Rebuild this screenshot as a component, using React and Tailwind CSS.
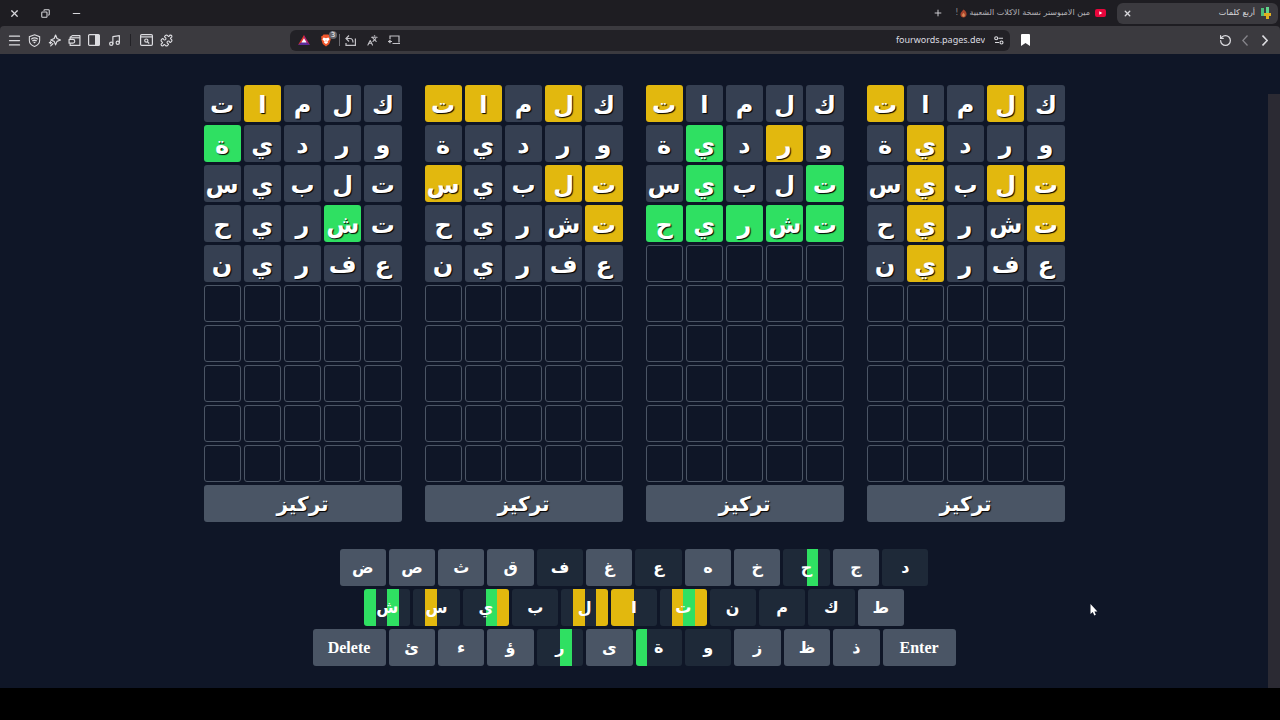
/**
 * Four Words (أربع كلمات)
 *
 * Four boards that share the same guesses, with an on-screen keyboard
 * whose keys show one colour strip per board.
 */

import {
  X, Copy, Minus, Plus, Menu, Music, Puzzle, Languages, RotateCcw,
} from 'lucide-react';

const GUESSES = ['كلمات', 'وردية', 'تلبيس', 'تشريح', 'عفرين'];
const MAX_ROWS = 10;

// g = right place, y = wrong place, - = not in the word (in reading order)
const BOARDS = [
  ['---y-', '----g', '-----', '-g---', '-----'],
  ['-y-yy', '-----', 'yy--y', 'y----', '-----'],
  ['----y', '-y-g-', 'g--g-', 'ggggg'],
  ['-y--y', '---y-', 'yy-y-', 'y--y-', '---y-'],
];

const KEY_ROWS = [
  ['ض', 'ص', 'ث', 'ق', 'ف', 'غ', 'ع', 'ه', 'خ', 'ح', 'ج', 'د'],
  ['ش', 'س', 'ي', 'ب', 'ل', 'ا', 'ت', 'ن', 'م', 'ك', 'ط'],
  ['Delete', 'ئ', 'ء', 'ؤ', 'ر', 'ى', 'ة', 'و', 'ز', 'ظ', 'ذ', 'Enter'],
];

const ROW_WIDTHS = ['max-w-[589px]', 'max-w-[540px]', 'max-w-[643px]'];

const MARK_COLORS = {
  g: 'bg-[#2fe062]',
  y: 'bg-[#e2b80e]',
  '-': 'bg-[#364052]',
};

const usedLetters = new Set(GUESSES.join(''));

// Best mark a letter has received on one board
const getMark = (board, letter) => {
  let best = null;
  board.forEach((marks, row) => {
    [...GUESSES[row]].forEach((char, i) => {
      if (char !== letter) return;
      if (marks[i] === 'g') best = 'g';
      if (marks[i] === 'y' && best !== 'g') best = 'y';
    });
  });
  return best;
};

function IconButton({ label, className = '', children }) {
  return (
    <button aria-label={label} className={`flex h-5 w-5 flex-none items-center justify-center ${className}`}>
      {children}
    </button>
  );
}

function TabBar() {
  return (
    <div className="flex h-[26px] items-center bg-[#1e1d22] pl-1 pr-[2px] text-[#d8d8dc]">
      <div className="flex items-center gap-[11px]">
        <IconButton label="إغلاق النافذة"><X size={11} strokeWidth={2.6} /></IconButton>
        <IconButton label="استعادة"><Copy size={9} strokeWidth={2.8} className="-scale-x-100" /></IconButton>
        <IconButton label="تصغير"><Minus size={11} strokeWidth={2.6} /></IconButton>
      </div>

      <div className="ml-auto flex items-center" dir="rtl">
        {/* Active tab */}
        <div className="flex h-[21px] w-[161px] items-center rounded-md bg-[#3b3a3f] pr-[7px]">
          <svg width="10" height="12" viewBox="0 0 10 12" className="flex-none">
            <path d="M0 1h3v5h2v3H0z" fill="#4cbf7a" />
            <path d="M5 0h3v6H5z" fill="#62d68c" />
            <path d="M3 6h7v3H8v3H5V9H3z" fill="#e0b020" />
          </svg>
          <span className="mr-[6px] text-[8px] leading-3">أربع كلمات</span>
          <IconButton label="إغلاق علامة التبويب" className="mr-auto"><X size={9} strokeWidth={3.6} /></IconButton>
        </div>

        {/* Background tab */}
        <div className="flex h-[21px] w-[169px] items-center pr-[11px]">
          <svg width="11" height="8" viewBox="0 0 11 8" className="flex-none">
            <rect width="11" height="8" rx="2" fill="#e8063c" />
            <path d="M4.3 2.2v3.600L7.300 4z" fill="#fff" />
          </svg>
          <span className="mr-[5px] whitespace-nowrap text-[8px] leading-3 text-[#b4b3b8]">مين الامبوستر نسخة الاكلات الشعبية</span>
          <svg width="7" height="9" viewBox="0 0 8 9" className="mr-[2px] flex-none">
            <path d="M4 0c1.500 1 3.500 2.500 3.500 5S6 9 4 9 .5 7.500 .5 5.500 2.500 2 4 0z" fill="#a8442c" />
            <path d="M4 3.500c1 1 1.600 1.800 1.600 3S4.800 8.300 4 8.300 2.400 7.500 2.400 6.500 3.200 4.500 4 3.500z" fill="#d98a58" />
          </svg>
          <span className="mr-[2px] text-[8px] leading-3 text-[#8a898e]">!</span>
        </div>
        <IconButton label="علامة تبويب جديدة"><Plus size={10} strokeWidth={2.2} /></IconButton>
      </div>
    </div>
  );
}

function Toolbar() {
  return (
    <div className="flex h-7 items-center rounded-t-sm bg-[#3b3a3f] pl-1 pr-[5px] text-[#dcdce0]">
      <IconButton label="القائمة"><Menu size={15} strokeWidth={2} /></IconButton>
      <IconButton label="VPN">
        <svg width="13" height="13" viewBox="0 0 24 24" fill="none" stroke="currentColor" strokeWidth="2">
          <path d="M12 1.500 21.500 5v7c0 5.500-4 9-9.500 11C6.500 21 2.500 17.500 2.500 12V5z" />
          <path d="M6 9.500c4-3 8-3 12 0M8 13c2.700-2 5.300-2 8 0M10.500 16.300c1-.8 2-.8 3 0" strokeWidth="2.400" />
        </svg>
      </IconButton>
      <IconButton label="Leo">
        <svg width="13" height="13" viewBox="0 0 24 24" fill="none" stroke="currentColor" strokeWidth="2.200" strokeLinejoin="round">
          <path d="m14 2 2.600 6.400L23 11l-6.400 2.600L14 20l-2.600-6.400L5 11l6.400-2.600z" />
          <path d="M4.500 14v4M2.500 16h4M5 22l4-4" strokeLinecap="round" />
        </svg>
      </IconButton>
      <IconButton label="المحفظة">
        <svg width="13" height="13" viewBox="0 0 24 24" fill="none" stroke="currentColor" strokeWidth="2.200" strokeLinejoin="round">
          <path d="M4 10V6l4-3h14v18H4v-4" />
          <path d="M4 7h18" />
          <path d="M2 10h7a3.500 3.500 0 0 1 0 7H2z" />
        </svg>
      </IconButton>
      <IconButton label="الشريط الجانبي">
        <svg width="12" height="12" viewBox="0 0 12 12">
          <rect x="0.600" y="0.600" width="10.800" height="10.800" rx="1" fill="none" stroke="currentColor" strokeWidth="1.200" />
          <path d="M7 1h4.500v10H7z" fill="currentColor" />
        </svg>
      </IconButton>
      <IconButton label="الموسيقى"><Music size={13} strokeWidth={2.2} /></IconButton>
      <div className="flex w-3 justify-center"><span className="h-3 w-px bg-[#222126]" /></div>
      <IconButton label="بحث في الصفحة">
        <svg width="13" height="12" viewBox="0 0 13 12" fill="none" stroke="currentColor" strokeWidth="1.200">
          <rect x="0.600" y="0.600" width="11.800" height="10.800" rx="1.200" />
          <path d="M.6 2.900h11.800" />
          <circle cx="6.300" cy="6.600" r="1.600" />
          <path d="m7.500 7.800 1.700 1.700" />
        </svg>
      </IconButton>
      <IconButton label="الإضافات"><Puzzle size={13} strokeWidth={2.1} /></IconButton>

      {/* Address bar */}
      <div className="ml-[114px] flex h-[21px] flex-1 items-center rounded-md bg-[#222126] pl-1 pr-[1px]">
        <IconButton label="Brave Rewards">
          <svg width="12" height="10" viewBox="0 0 12 10">
            <path d="M6 0v6L0 10z" fill="#e2352b" />
            <path d="M6 0v6l6 4z" fill="#b5206f" />
            <path d="M0 10h12L6 5.500z" fill="#5c2b9b" />
            <path d="m6 3.300 2.600 4.200H3.400z" fill="#fff" />
          </svg>
        </IconButton>
        <IconButton label="Brave Shields" className="relative ml-[2px]">
          <svg width="12" height="13" viewBox="0 0 24 26">
            <path d="M7 1h10l2.500 3L22 5l-1 4 .5 2-3 9-6.500 5-6.500-5-3-9L3 9 2 5l2.500-1z" fill="#f0562b" />
            <path d="m7 7 5 1.500L17 7l2 4-4 4 1 2-4 3-4-3 1-2-4-4zM12 11l-1 4h2z" fill="#fff" fillRule="evenodd" />
          </svg>
          <span className="absolute -right-px top-px h-2 w-2 rounded-sm bg-[#67666c] text-center text-[7px] leading-2 text-white">3</span>
        </IconButton>
        <span className="ml-[3px] h-3 w-px bg-[#6e6d73]" />
        <div className="flex gap-[2px] text-[#c2c1c6]">
          <IconButton label="رجوع للنسخة الأصلية">
            <svg width="11" height="11" viewBox="0 0 11 11" fill="none" stroke="currentColor" strokeWidth="1.200">
              <path d="M4 .5 1 3.500l3 3M1 3.500h4c2 0 3 1.500 3 4" />
              <path d="M1 8v2.400h9.400V3.500" />
            </svg>
          </IconButton>
          <IconButton label="ترجمة"><Languages size={11} strokeWidth={2.4} className="-scale-x-100" /></IconButton>
          <IconButton label="إرسال إلى جهاز">
            <svg width="12" height="10" viewBox="0 0 12 10" fill="none" stroke="currentColor" strokeWidth="1.200">
              <path d="M2 4V1h9v6.500M4.500 8.500H12M0 6.500h4M2.500 4.800.800 6.500l1.700 1.700" />
            </svg>
          </IconButton>
        </div>
        <input
          type="text"
          aria-label="العنوان"
          defaultValue="fourwords.pages.dev"
          className="min-w-0 flex-1 bg-transparent pr-1 text-right font-['Noto_Sans',sans-serif] text-[9px] leading-3 text-[#dcdce0] outline-none"
        />
        <IconButton label="معلومات الموقع">
          <svg width="10" height="9" viewBox="0 0 10 9" fill="none" stroke="currentColor" strokeWidth="1.100">
            <circle cx="2.200" cy="2.200" r="1.500" />
            <path d="M4.500 2.200h4.500M1 6.500h4" />
            <circle cx="7.500" cy="6.500" r="1.500" />
          </svg>
        </IconButton>
      </div>

      <IconButton label="إشارة مرجعية" className="ml-[5px] mr-[180px]">
        <svg width="9" height="12" viewBox="0 0 9 12"><path d="M0 1q0-1 1-1h7q1 0 1 1v11L4.500 9 0 12z" fill="#fff" /></svg>
      </IconButton>
      <IconButton label="إعادة تحميل"><RotateCcw size={13} strokeWidth={2.3} /></IconButton>
      <IconButton label="السابق" className="text-[#87868c]">
        <svg width="6" height="11" viewBox="0 0 6 11" fill="none" stroke="currentColor" strokeWidth="1.300"><path d="M5.500.5.800 5.500l4.700 5" /></svg>
      </IconButton>
      <IconButton label="التالي">
        <svg width="6" height="11" viewBox="0 0 6 11" fill="none" stroke="currentColor" strokeWidth="1.600"><path d="m.5.500 4.700 5-4.700 5" /></svg>
      </IconButton>
    </div>
  );
}

function Board({ marks }) {
  const rows = Array.from({ length: MAX_ROWS }, (_, i) => i);

  return (
    <section className="flex flex-col gap-[3px]">
      {rows.map(row => (
        <div key={row} dir="rtl" className="grid grid-cols-5 gap-[3px]">
          {[0, 1, 2, 3, 4].map(col => (
            marks[row] ? (
              <div
                key={col}
                className={`flex h-[37px] items-center justify-center rounded-[3px] pt-[2px] text-2xl font-bold leading-8 text-white [text-shadow:1px_1px_1px_#000] ${MARK_COLORS[marks[row][col]]}`}
              >
                {GUESSES[row][col]}
              </div>
            ) : (
              <div key={col} className="h-[37px] rounded-[3px] border border-[#4b5565]" />
            )
          ))}
        </div>
      ))}
      <button className="h-[37px] rounded-[3px] bg-[#4a5565] text-xl font-bold leading-7 text-white [text-shadow:1px_1px_1px_#000]">
        تركيز
      </button>
    </section>
  );
}

function Key({ label }) {
  if (label.length > 1) {
    return (
      <button className="h-[37px] w-[73px] flex-none rounded-[3px] bg-[#4a5565] font-['Liberation_Serif',serif] text-base font-bold text-white">
        {label}
      </button>
    );
  }

  const used = usedLetters.has(label);
  return (
    <button
      className={`relative h-[37px] min-w-0 flex-1 overflow-hidden rounded-[3px] text-base font-bold text-white ${used ? 'bg-[#1e2938]' : 'bg-[#4a5565]'}`}
    >
      {used && (
        <span className="absolute inset-0 grid grid-cols-4">
          {BOARDS.map((board, i) => {
            const mark = getMark(board, label);
            return <span key={i} className={mark ? MARK_COLORS[mark] : ''} />;
          })}
        </span>
      )}
      <span className="relative">{label}</span>
    </button>
  );
}

export default function App() {
  return (
    <div className="flex min-h-screen flex-col bg-black font-['DejaVu_Sans',sans-serif]">
      <header className="bg-[#1e1d22]">
        <TabBar />
        <Toolbar />
      </header>

      <div className="flex flex-1 bg-[#0f1627]">
        <main className="flex-1 px-4 pb-[21px] pt-[31px]">
          <div className="mx-auto grid max-w-[861px] grid-cols-4 gap-[23px]">
            {BOARDS.map((marks, i) => <Board key={i} marks={marks} />)}
          </div>

          <div className="mt-[27px] flex flex-col items-center gap-[3px]">
            {KEY_ROWS.map((row, i) => (
              <div key={i} className={`flex w-full gap-[3px] ${ROW_WIDTHS[i]}`}>
                {row.map(label => <Key key={label} label={label} />)}
              </div>
            ))}
          </div>
        </main>

        {/* Scrollbar */}
        <div className="flex w-3 flex-col pt-10">
          <div className="flex-1 bg-[#2b2a33]" />
        </div>
      </div>

      <footer className="h-8 bg-black" />

      {/* Mouse pointer */}
      <svg className="absolute left-[1090px] top-[603px]" width="8" height="14" viewBox="0 0 8 14">
        <path d="M.5 1v10l2.300-2 1.500 3.500 1.500-.7L4.400 8.500h3z" fill="#fff" />
      </svg>
    </div>
  );
}
